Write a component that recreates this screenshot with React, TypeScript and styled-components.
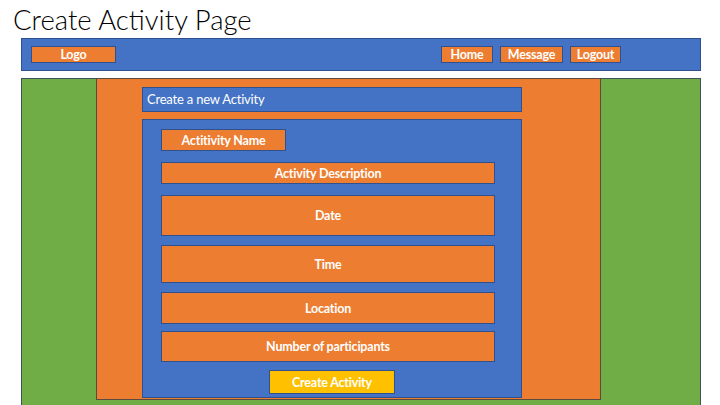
import React from "react";
import styled, { createGlobalStyle } from "styled-components";

const Global = createGlobalStyle`
  * { box-sizing: border-box; }
  html, body { margin: 0; padding: 0; background: #ffffff; overflow: hidden; }
  body { font-family: Lato, "Open Sans", sans-serif; }
`;

const BLUE = "#4472c4";
const ORANGE = "#ed7d31";
const GREEN = "#70ad47";
const YELLOW = "#ffc000";
const EDGE = "#2f528f";

const Page = styled.div`
  width: 720px;
  height: 405px;
  display: flex;
  flex-direction: column;
`;

const Title = styled.h1`
  margin: 0;
  padding: 5px 0 0 13px;
  height: 38px;
  font-family: Lato, sans-serif;
  font-weight: 300;
  font-size: 27.5px;
  line-height: 29px;
  color: #000;
  letter-spacing: 0px;
`;

const NavBar = styled.nav`
  margin: 0 0 0 21px;
  width: 680px;
  height: 33px;
  background: ${BLUE};
  border: 1px solid ${EDGE};
  display: flex;
  align-items: flex-start;
  padding: 7px 0 0 9px;
`;

const NavGroup = styled.div`
  margin-left: auto;
  margin-right: 79px;
  display: flex;
  gap: 7px;
`;

const NavButton = styled.div<{ $w: number }>`
  width: ${(p) => p.$w}px;
  height: 17px;
  background: ${ORANGE};
  border: 1px solid ${EDGE};
  color: #fff;
  font-family: Lato, sans-serif;
  font-weight: 700;
  font-size: 12.5px;
  line-height: 15px;
  text-align: center;
  letter-spacing: -0.2px;
`;

const Main = styled.main`
  margin: 7px 0 0 21px;
  width: 680px;
  flex: 1;
  background: ${GREEN};
  border: 1px solid #41525f;
  border-bottom: none;
  display: flex;
  align-items: flex-start;
  padding-left: 74px;
`;

const Panel = styled.section`
  width: 505px;
  height: 322px;
  margin-top: -1px;
  background: ${ORANGE};
  border: 1px solid #5a4a40;
  padding: 8px 0 0 45px;
  display: flex;
  flex-direction: column;
  gap: 7px;
`;

const Header = styled.div`
  width: 380px;
  height: 25px;
  background: ${BLUE};
  border: 1px solid ${EDGE};
  color: #fff;
  font-family: Lato, sans-serif;
  font-weight: 400;
  font-size: 13px;
  line-height: 23px;
  padding-left: 4px;
  letter-spacing: -0.2px;
`;

const Form = styled.div`
  width: 380px;
  height: 279px;
  background: ${BLUE};
  border: 1px solid ${EDGE};
  padding: 9px 0 0 18px;
  display: flex;
  flex-direction: column;
`;

const Field = styled.div<{ $h: number; $gap: number; $w?: number }>`
  width: ${(p) => p.$w ?? 334}px;
  height: ${(p) => p.$h}px;
  margin-bottom: ${(p) => p.$gap}px;
  background: ${ORANGE};
  border: 1px solid ${EDGE};
  color: #fff;
  font-family: Lato, sans-serif;
  font-weight: 700;
  font-size: 12.5px;
  letter-spacing: -0.2px;
  display: flex;
  align-items: center;
  justify-content: center;
`;

const Submit = styled.div`
  width: 126px;
  height: 24px;
  margin-left: 108px;
  background: ${YELLOW};
  border: 1px solid ${EDGE};
  color: #fff;
  font-family: Lato, sans-serif;
  font-weight: 700;
  font-size: 12.5px;
  letter-spacing: -0.2px;
  display: flex;
  align-items: center;
  justify-content: center;
`;

export default function App() {
  return (
    <Page>
      <Global />
      <Title>Create Activity Page</Title>
      <NavBar>
        <NavButton $w={85}>Logo</NavButton>
        <NavGroup>
          <NavButton $w={52}>Home</NavButton>
          <NavButton $w={63}>Message</NavButton>
          <NavButton $w={51}>Logout</NavButton>
        </NavGroup>
      </NavBar>
      <Main>
        <Panel>
          <Header>Create a new Activity</Header>
          <Form>
            <Field $w={125} $h={22} $gap={11}>Actitivity Name</Field>
            <Field $h={22} $gap={11}>Activity Description</Field>
            <Field $h={41} $gap={9}>Date</Field>
            <Field $h={38} $gap={9}>Time</Field>
            <Field $h={32} $gap={7}>Location</Field>
            <Field $h={31} $gap={8}>Number of participants</Field>
            <Submit>Create Activity</Submit>
          </Form>
        </Panel>
      </Main>
    </Page>
  );
}
